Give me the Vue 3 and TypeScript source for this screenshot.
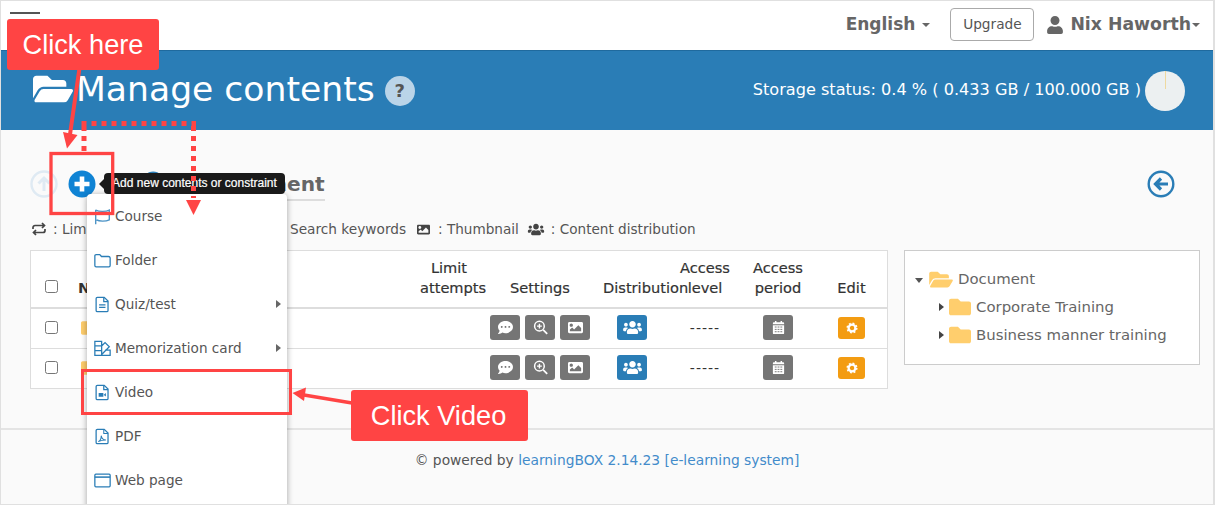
<script setup lang="ts">
interface Row { id: number }
const rows: Row[] = [{ id: 1 }, { id: 2 }]
const treeChildren: string[] = ['Corporate Training', 'Business manner training']
const USER = 'M224 256c70.7 0 128-57.3 128-128S294.7 0 224 0 96 57.3 96 128s57.3 128 128 128zm89.6 32h-16.7c-22.2 10.2-46.9 16-72.9 16s-50.6-5.8-72.9-16h-16.7C60.2 288 0 348.2 0 422.4V464c0 26.5 21.5 48 48 48h352c26.5 0 48-21.5 48-48v-41.6c0-74.2-60.2-134.4-134.4-134.4z'
const FOLDER_OPEN = 'M572.694 292.093L500.27 416.248A63.997 63.997 0 0 1 444.989 448H45.025c-18.523 0-30.064-20.093-20.731-36.093l72.424-124.155A64 64 0 0 1 152 256h399.964c18.523 0 30.064 20.093 20.73 36.093zM152 224h328v-48c0-26.51-21.49-48-48-48H272l-64-64H48C21.49 64 0 85.49 0 112v278.046l69.077-118.418C86.214 242.25 117.989 224 152 224z'
const FOLDER = 'M464 128H272l-64-64H48C21.49 64 0 85.49 0 112v288c0 26.51 21.49 48 48 48h416c26.51 0 48-21.49 48-48V176c0-26.51-21.49-48-48-48z'
const USERS = 'M96 224c35.3 0 64-28.7 64-64s-28.7-64-64-64-64 28.7-64 64 28.7 64 64 64zm448 0c35.3 0 64-28.7 64-64s-28.7-64-64-64-64 28.7-64 64 28.7 64 64 64zm32 32h-64c-17.6 0-33.5 7.1-45.1 18.6 40.3 22.1 68.9 62 75.1 109.4h66c17.7 0 32-14.3 32-32v-32c0-35.3-28.7-64-64-64zm-256 0c61.9 0 112-50.1 112-112S381.9 32 320 32 208 82.1 208 144s50.1 112 112 112zm76.8 32h-8.3c-20.8 10-43.9 16-68.5 16s-47.6-6-68.5-16h-8.3C179.6 288 128 339.6 128 403.2V432c0 26.5 21.5 48 48 48h288c26.5 0 48-21.5 48-48v-28.8c0-63.6-51.6-115.2-115.2-115.2zm-223.7-13.4C161.5 263.1 145.6 256 128 256H64c-35.3 0-64 28.7-64 64v32c0 17.7 14.3 32 32 32h65.9c6.3-47.4 34.9-87.3 75.2-109.4z'
const COMMENT = 'M256 32C114.6 32 0 125.1 0 240c0 49.6 21.4 95 57 130.7C44.5 421.1 2.7 466 2.2 466.5c-2.2 2.3-2.8 5.7-1.5 8.7S4.8 480 8 480c66.3 0 116-31.8 140.6-51.4 32.7 12.3 69 19.4 107.4 19.4 141.4 0 256-93.1 256-208S397.4 32 256 32zM128 272c-17.7 0-32-14.3-32-32s14.3-32 32-32 32 14.3 32 32-14.3 32-32 32zm128 0c-17.7 0-32-14.3-32-32s14.3-32 32-32 32 14.3 32 32-14.3 32-32 32zm128 0c-17.7 0-32-14.3-32-32s14.3-32 32-32 32 14.3 32 32-14.3 32-32 32z'
const IMAGE = 'M464 448H48c-26.51 0-48-21.49-48-48V112c0-26.51 21.49-48 48-48h416c26.51 0 48 21.49 48 48v288c0 26.51-21.49 48-48 48zM112 120c-30.928 0-56 25.072-56 56s25.072 56 56 56 56-25.072 56-56-25.072-56-56-56zM64 384h384V272l-87.515-87.515c-4.686-4.686-12.284-4.686-16.971 0L208 320l-55.515-55.515c-4.686-4.686-12.284-4.686-16.971 0L64 320v64z'
</script>

<template>
  <div class="page">
    <nav class="navbar">
      <div class="burger"><i></i><i></i><i></i></div>
      <div class="nav-right">
        <span class="lang"><span class="lang-text">English</span><b class="caret"></b></span>
        <button class="upgrade">Upgrade</button>
        <svg class="user-icon" viewBox="0 0 448 512"><path :d="USER" /></svg>
        <span class="user-name">Nix Haworth</span><b class="caret small"></b>
      </div>
    </nav>

    <header class="banner">
      <div class="title-wrap">
        <svg class="title-icon" viewBox="0 0 576 512"><path :d="FOLDER_OPEN" /></svg>
        <h1>Manage contents</h1>
        <span class="help">?</span>
      </div>
      <div class="storage">
        <span class="storage-text">Storage status: 0.4 % ( 0.433 GB / 100.000 GB )</span>
        <span class="pie"><i></i></span>
      </div>
    </header>

    <main class="content">
      <div class="toolbar">
        <div class="tools">
          <svg class="tool up" viewBox="0 0 28 28">
            <circle cx="14" cy="14" r="12.5" fill="none" stroke="#dfeaf3" stroke-width="2.4" />
            <path d="M14 21V8M8.5 13.5 14 8l5.5 5.5" fill="none" stroke="#dfeaf3" stroke-width="3" />
          </svg>
          <svg class="tool plus" viewBox="0 0 28 28">
            <circle cx="14" cy="14" r="13.5" fill="#0f83d4" />
            <path d="M14 6.500v15M6.500 14h15" stroke="#fff" stroke-width="4.600" />
          </svg>
          <svg class="tool folder" viewBox="0 0 512 512"><path fill="#f39c12" :d="FOLDER" /></svg>
          <svg class="tool search" viewBox="0 0 28 28">
            <circle cx="12" cy="12" r="10" fill="none" stroke="#2a7db6" stroke-width="3" />
            <path d="M20 20l7 7" stroke="#2a7db6" stroke-width="3.5" />
          </svg>
          <svg class="tool folder" viewBox="0 0 512 512"><path fill="#ffce6d" :d="FOLDER" /></svg>
          <h2>Document</h2>
        </div>
        <svg class="back" viewBox="0 0 28 28">
          <circle cx="14" cy="14" r="12.3" fill="none" stroke="#2a7db6" stroke-width="2.4" />
          <path d="M21 14H9M14 8.5 8.5 14l5.5 5.5" fill="none" stroke="#2a7db6" stroke-width="3.2" />
        </svg>
      </div>

      <div class="legend">
        <span class="legend-first">
          <svg class="lg loop" viewBox="0 0 16 14">
            <path d="M2 7V5.500A2 2 0 0 1 4 3.500h9M11 1l2.500 2.500L11 6M14 7v1.500a2 2 0 0 1-2 2H3M5 8 2.500 10.500 5 13" fill="none" stroke="#444" stroke-width="1.700" />
          </svg>
          : Limit attempts
        </span>
        <span class="legend-search">Search keywords</span>
        <span class="legend-item thumb">
          <svg class="lg" viewBox="0 0 512 512"><path fill="#444" :d="IMAGE" /></svg>
          : Thumbnail
        </span>
        <span class="legend-item">
          <svg class="lg wide" viewBox="0 0 640 512"><path fill="#444" :d="USERS" /></svg>
          : Content distribution
        </span>
      </div>

      <div class="columns">
        <section class="table">
          <div class="tr head">
            <div class="td"><input type="checkbox" /></div>
            <div class="td name">Name</div>
            <div class="td"><div class="cell">Limit<br />attempts</div></div>
            <div class="td">Settings</div>
            <div class="td dist"><span>Distribution</span></div>
            <div class="td">Access<br />level</div>
            <div class="td">Access<br />period</div>
            <div class="td">Edit</div>
          </div>
          <div v-for="r in rows" :key="r.id" class="tr body">
            <div class="td"><input type="checkbox" /></div>
            <div class="td name"><svg class="row-folder" viewBox="0 0 512 512"><path :d="FOLDER" /></svg></div>
            <div class="td"></div>
            <div class="td btns">
              <span class="btn"><svg viewBox="0 0 512 512"><path :d="COMMENT" /></svg></span>
              <span class="btn">
                <svg viewBox="0 0 28 28">
                  <circle cx="12" cy="11.500" r="9" fill="none" stroke="#fff" stroke-width="2.800" />
                  <path d="M19 18.500l7.500 7.500" stroke="#fff" stroke-width="3.400" />
                  <path d="M12 7v9M7.500 11.500h9" stroke="#fff" stroke-width="2.600" />
                </svg>
              </span>
              <span class="btn"><svg viewBox="0 0 512 512"><path :d="IMAGE" /></svg></span>
            </div>
            <div class="td"><span class="btn blue"><svg class="users" viewBox="0 0 640 512"><path :d="USERS" /></svg></span></div>
            <div class="td dash">-----</div>
            <div class="td">
              <span class="btn">
                <svg viewBox="0 0 14 16">
                  <path d="M1 5.500h12V14a1 1 0 0 1-1 1H2a1 1 0 0 1-1-1z" fill="#fff" />
                  <path d="M2 2.500h10a1 1 0 0 1 1 1v1H1v-1a1 1 0 0 1 1-1z" fill="#fff" />
                  <path d="M4 1v2.500M10 1v2.500" stroke="#fff" stroke-width="1.600" />
                  <path d="M3 7.500h2M6 7.500h2M9 7.500h2M3 10h2M6 10h2M9 10h2M3 12.500h2M6 12.500h2M9 12.500h2" stroke="#757575" stroke-width="1" />
                </svg>
              </span>
            </div>
            <div class="td">
              <span class="btn orange">
                <svg viewBox="0 0 16 16">
                  <circle cx="8" cy="8" r="4.500" fill="none" stroke="#fff" stroke-width="3" />
                  <circle cx="8" cy="8" r="6.200" fill="none" stroke="#fff" stroke-width="2.400" stroke-dasharray="2.400 2.470" />
                </svg>
              </span>
            </div>
          </div>
        </section>

        <aside class="tree">
          <div class="tree-row root">
            <span class="tri down"></span>
            <svg class="tree-open" viewBox="0 0 576 512"><path :d="FOLDER_OPEN" /></svg>
            <span>Document</span>
          </div>
          <div v-for="c in treeChildren" :key="c" class="tree-row child">
            <span class="tri right"></span>
            <svg class="tree-folder" viewBox="0 0 512 512"><path :d="FOLDER" /></svg>
            <span>{{ c }}</span>
          </div>
        </aside>
      </div>
    </main>

    <footer class="footer">
      © powered by <a>learningBOX 2.14.23 [e-learning system]</a>
    </footer>

    <!-- Dropdown menu, tooltip and tutorial annotations lie over the page -->
    <div class="tooltip">Add new contents or constraint</div>

    <ul class="menu">
      <li>
        <svg viewBox="0 0 20 20"><path d="M2 2.500c4 2 12 2 16 0V14c-4 2-12 2-15 0M2 2v17" fill="none" stroke="#4b93c6" stroke-width="1.600" /></svg>
        Course
      </li>
      <li>
        <svg viewBox="0 0 20 20"><path d="M1 16V4.500A1.500 1.500 0 0 1 2.500 3h4.300l2 2.300h8.200A2 2 0 0 1 19 7v9a1.500 1.500 0 0 1-1.500 1.500h-15A1.500 1.500 0 0 1 1 16z" fill="none" stroke="#2a7db6" stroke-width="1.500" /></svg>
        Folder
      </li>
      <li>
        <svg viewBox="0 0 20 20"><path d="M4 1.500h8l4.500 4.500v11a1.500 1.500 0 0 1-1.500 1.500H4A1.500 1.500 0 0 1 2.500 17V3A1.500 1.500 0 0 1 4 1.500z" fill="none" stroke="#2a7db6" stroke-width="1.500" /><path d="M11.500 1.500V6.500h5M6 10.500h7.500M6 13.500h7.500" fill="none" stroke="#2a7db6" stroke-width="1.500" /></svg>
        Quiz/test
        <span class="tri sub"></span>
      </li>
      <li>
        <svg viewBox="0 0 20 20"><path d="M1 1.500h8v16.500H1zM1 7h8M1 12.500h8M9 7l4-4 5 5-9 9M9 18h10v-6h-6" fill="none" stroke="#2a7db6" stroke-width="1.500" /></svg>
        Memorization card
        <span class="tri sub"></span>
      </li>
      <li>
        <svg viewBox="0 0 20 20"><path d="M4 1.500h8l4.500 4.500v11a1.500 1.500 0 0 1-1.500 1.500H4A1.500 1.500 0 0 1 2.500 17V3A1.500 1.500 0 0 1 4 1.500z" fill="none" stroke="#2a7db6" stroke-width="1.500" /><path d="M11.500 1.500V6.500h5" fill="none" stroke="#2a7db6" stroke-width="1.500" /><path d="M5.500 10.500h5.500v4.500H5.500zM11.500 12.500l2.500-1.800v4l-2.500-1.800z" fill="#2a7db6" /></svg>
        Video
      </li>
      <li>
        <svg viewBox="0 0 20 20"><path d="M4 1.500h8l4.500 4.500v11a1.500 1.500 0 0 1-1.500 1.500H4A1.500 1.500 0 0 1 2.500 17V3A1.500 1.500 0 0 1 4 1.500z" fill="none" stroke="#2a7db6" stroke-width="1.500" /><path d="M11.500 1.500V6.500h5M5 16c2-1 3.500-4 3.500-7 .5 3 2.500 5 5.500 5.200-3 0-6 .6-9 1.800z" fill="none" stroke="#2a7db6" stroke-width="1.200" /></svg>
        PDF
      </li>
      <li>
        <svg viewBox="0 0 20 20"><rect x="1" y="2.500" width="18" height="15" rx="1.200" fill="none" stroke="#2a7db6" stroke-width="1.500" /><path d="M1 6h18" stroke="#2a7db6" stroke-width="1.800" /></svg>
        Web page
      </li>
    </ul>

    <svg class="overlay" viewBox="0 0 1215 505">
      <!-- red dotted path -->
      <path d="M81.500 123.500H196M84 126V151M193.500 126V198" fill="none" stroke="#ff4444" stroke-width="5" stroke-dasharray="5 5" />
      <path d="M186 200h15l-7.500 15z" fill="#ff4444" />
      <!-- arrow from Click here -->
      <path d="M79.500 68 69.500 138" stroke="#ff4444" stroke-width="4" />
      <path d="M63 132l14.500 3-10.500 13.500z" fill="#ff4444" />
      <rect x="51" y="153.500" width="61.700" height="60" fill="none" stroke="#ff4444" stroke-width="3.300" />
      <!-- Video highlight -->
      <rect x="82.500" y="370.500" width="208" height="43" fill="none" stroke="#ff4444" stroke-width="3" />
      <path d="M352 403 304 395" stroke="#ff4444" stroke-width="3.500" />
      <path d="M292.500 393 306 387.500 304 401z" fill="#ff4444" />
    </svg>
    <div class="callout here">Click here</div>
    <div class="callout video">Click Video</div>
  </div>
</template>

<style>
html, body { margin: 0; padding: 0; background: #fff; }
</style>

<style scoped>
.page {
  position: relative;
  width: 1215px;
  height: 505px;
  box-sizing: border-box;
  overflow: hidden;
  border-style: solid;
  border-color: #e0e0e0;
  border-width: 1px 2px 1px 1px;
  background: #fafafa;
  color: #555;
  font: 14px/20px "DejaVu Sans", sans-serif;
}
.navbar {
  height: 49px;
  background: #fff;
  display: flex;
  justify-content: space-between;
  box-sizing: border-box;
  padding: 7px 13px 0 9px;
}
.burger { display: flex; flex-direction: column; gap: 6px; padding-top: 4px; }
.burger i { display: block; width: 30px; height: 2px; background: #555; }
.nav-right { display: flex; align-items: center; height: 33px; color: #666; font-weight: 700; font-size: 17.3px; }
.lang { display: flex; align-items: center; }
.lang-text { font-size: 17px; padding-bottom: 2px; }
.user-name { padding-bottom: 1px; }
.caret { display: inline-block; margin-left: 7px; border: 4px solid transparent; border-top-color: #666; border-bottom: 0; }
.caret.small { margin-left: 1px; }
.upgrade {
  margin-left: 20px;
  width: 84px;
  height: 33px;
  padding: 0 0 2px;
  background: #fff;
  border: 1px solid #aaa;
  border-radius: 4px;
  color: #555;
  font: 13.700px "DejaVu Sans", sans-serif;
}
.user-icon { width: 16px; height: 18px; margin-left: 13px; margin-right: 7px; fill: #666; }
.banner {
  height: 80px;
  background: #2a7db6;
  border-top: 1px solid #1f6a9e;
  box-sizing: border-box;
  display: flex;
  align-items: center;
  justify-content: space-between;
  padding: 0 28px 0 32px;
  color: #fff;
}
.title-wrap { display: flex; align-items: center; padding-bottom: 3px; }
.title-icon { width: 40px; height: 36px; fill: #fff; margin-right: 3px; }
h1 { margin: 0 10px 0 0; font-weight: 400; font-size: 34.600px; line-height: 44px; }
.help {
  width: 30px;
  height: 30px;
  border-radius: 50%;
  background: #bad4e8;
  color: #555;
  font-weight: 700;
  font-size: 18px;
  line-height: 30px;
  text-align: center;
  margin-top: 3px;
}
.storage { display: flex; align-items: center; gap: 4px; font-size: 16.140px; }
.storage-text { padding-bottom: 2px; }
.pie { position: relative; width: 40px; height: 40px; border-radius: 50%; background: #ecf0f1; }
.pie i { position: absolute; left: 20px; top: 0; width: 1px; height: 18px; background: #eed9a0; }
.content { padding: 0 13px 0 29px; height: 298px; box-sizing: border-box; }
.toolbar { display: flex; justify-content: space-between; align-items: center; padding: 39px 25px 0 0; height: 68px; box-sizing: border-box; }
.tools { display: flex; align-items: center; position: relative; }
.tool { height: 28px; width: 28px; }
.plus { margin-left: 10px; }
.tool.folder { margin-left: 14px; width: 24px; height: 24px; }
.tool.search { margin-left: 8px; width: 26px; height: 26px; }
h2 {
  margin: 2px 0 0 3px;
  font-size: 20.200px;
  line-height: 30px;
  color: #666;
  border-bottom: 2px solid #ddd;
  height: 30px;
}
.back { width: 28px; height: 28px; }
.legend { display: flex; align-items: center; height: 20px; margin-top: 21px; white-space: nowrap; font-size: 13.600px; }
.legend-first { width: 260px; display: inline-flex; align-items: center; gap: 5px; overflow: hidden; }
.legend-search { width: 126px; font-size: 13.700px; }
.legend-item { display: inline-flex; align-items: center; gap: 6px; margin-right: 8px; }
.legend-item.thumb { gap: 7px; }
.lg { width: 15px; height: 13px; }
.lg.loop { width: 18px; height: 14px; }
.lg.wide { width: 18px; }
.columns { display: flex; align-items: flex-start; gap: 16px; margin-top: 11px; }
.table { width: 858px; border: 1px solid #ddd; background: #fff; box-sizing: border-box; }
.tr { display: grid; grid-template-columns: 40px 341px 74px 108px 76px 70px 76px 71px; }
.td { display: flex; align-items: center; justify-content: center; text-align: center; }
.cell { width: 58px; text-align: center; white-space: nowrap; }
.head { height: 58px; border-bottom: 2px solid #ddd; font-size: 14.600px; color: #333; line-height: 20px; -webkit-text-stroke: 0.2px #333; box-sizing: border-box; }
.head .td { align-items: flex-end; padding-bottom: 9px; }
.head .td:first-child { padding-bottom: 14px; }
.head .name { justify-content: flex-start; padding-left: 7px; font-weight: 700; -webkit-text-stroke: 0; }
.dist { justify-content: flex-start; padding-left: 9px; white-space: nowrap; }
.body { height: 40px; box-sizing: border-box; border-bottom: 1px solid #ddd; padding-bottom: 2px; }
.body:last-child { height: 39px; border-bottom: 0; padding-bottom: 2px; }
.body .name { justify-content: flex-start; padding-left: 10px; }
input[type="checkbox"] { width: 13px; height: 13px; margin: 0; }
.row-folder { width: 18px; height: 18px; fill: #ffce6d; }
.btns { gap: 5px; }
.btn {
  width: 30px;
  height: 25px;
  border-radius: 3px;
  background: #757575;
  display: inline-flex;
  align-items: center;
  justify-content: center;
}
.btn svg { width: 15px; height: 15px; fill: #fff; }
.btn svg.users { width: 19px; }
.btn.blue { background: #2a7db6; }
.btn.orange { background: #f39c12; width: 27px; height: 22px; }
.btn.orange svg { width: 12px; height: 12px; fill: none; }
.dash { color: #333; font-size: 14px; letter-spacing: 1px; }
.tree { width: 296px; height: 115px; border: 1px solid #ccc; background: #fff; box-sizing: border-box; padding: 14px 0 0 10px; color: #666; font-size: 14.900px; }
.tree-row { display: flex; align-items: center; height: 28px; }
.child { padding-left: 24px; }
.tree-open { width: 24px; height: 21px; fill: #ffce6d; margin: 0 5px 0 4px; }
.tree-folder { width: 22px; height: 22px; fill: #ffce6d; margin: 0 5px 0 5px; }
.tri { display: inline-block; width: 0; height: 0; border: 4px solid transparent; }
.tri.down { border-top: 5px solid #555; border-bottom: 0; margin-right: 2px; margin-top: 2px; }
.tri.right { border-left: 5px solid #444; border-right: 0; }
.footer {
  border-top: 2px solid #e4e4e4;
  box-sizing: border-box;
  height: 70px;
  padding-top: 20px;
  text-align: center;
  color: #555;
  font-size: 13.800px;
}
.footer a { color: #428bca; }
.tooltip {
  position: absolute;
  left: 103px;
  top: 172px;
  width: 181px;
  height: 21px;
  background: #1a1a1a;
  border-radius: 4px;
  color: #fff;
  font: 12px/21px "Liberation Sans", sans-serif;
  text-align: center;
  -webkit-text-stroke: 0.2px #fff;
  z-index: 3;
}
.tooltip::before {
  content: "";
  position: absolute;
  left: -5px;
  top: 6px;
  border-style: solid;
  border-width: 5px 5px 5px 0;
  border-color: transparent #1a1a1a transparent transparent;
}
.menu {
  position: absolute;
  left: 86px;
  top: 193px;
  width: 200px;
  height: 320px;
  margin: 0;
  padding: 0;
  list-style: none;
  background: #fff;
  border-radius: 4px;
  box-shadow: 0 1px 6px rgba(0, 0, 0, 0.35);
  z-index: 2;
  font-size: 13.600px;
}
.menu li {
  position: relative;
  display: flex;
  align-items: center;
  gap: 4px;
  height: 44px;
  padding-left: 7px;
  color: #555;
}
.menu li svg { width: 17px; height: 17px; }
.tri.sub { position: absolute; left: 189px; top: 18px; border-left: 5px solid #666; border-right: 0; }
.overlay { position: absolute; left: -1px; top: -1px; width: 1215px; height: 505px; pointer-events: none; z-index: 4; }
.callout {
  position: absolute;
  background: #ff4444;
  color: #fff;
  border-radius: 3px;
  font: 27.200px/51px "Liberation Sans", sans-serif;
  text-align: center;
  z-index: 5;
}
.here { left: 6px; top: 18px; width: 152px; height: 51px; }
.video { left: 350px; top: 389px; width: 175px; height: 51px; padding-right: 2px; }
</style>
